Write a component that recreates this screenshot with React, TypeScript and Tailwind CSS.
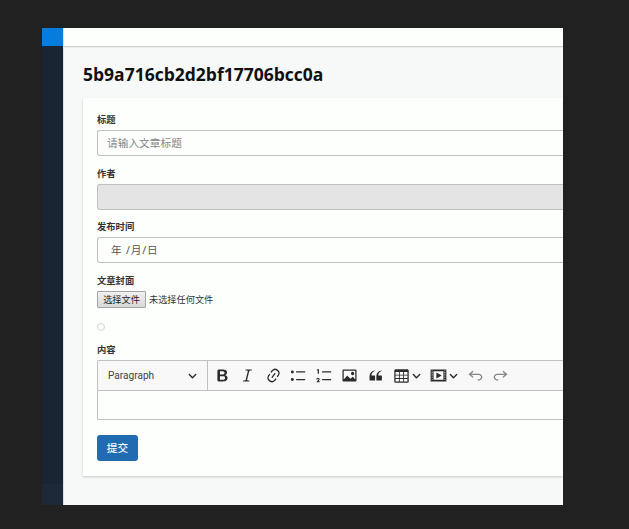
import type { ReactNode } from 'react';

const QUOTE =
  'M3 10.423a6.5 6.5 0 0 1 6.056-6.408l.038.67C6.448 5.423 5.354 7.663 5.22 10H9c.552 0 .5.432.5.986v4.511c0 .554-.448.503-1 .503h-5c-.552 0-.5-.449-.5-1.003v-4.574z';
const LINES =
  'M7 5.75c0 .414.336.75.75.75h9.5a.75.75 0 1 0 0-1.5h-9.5a.75.75 0 0 0-.75.75zM7 14.75c0 .414.336.75.75.75h9.5a.75.75 0 1 0 0-1.5h-9.5a.75.75 0 0 0-.75.75z';
const UNDO =
  'm5.042 9.367 2.189 1.837a.75.75 0 0 1-.965 1.149l-3.788-3.18a.747.747 0 0 1-.21-.284.75.75 0 0 1 .17-.945L6.23 4.762a.75.75 0 1 1 .964 1.15L4.863 7.866h8.917A.75.75 0 0 1 14 7.9a4 4 0 1 1-1.477 7.718l.344-1.489a2.5 2.5 0 1 0 1.094-4.73l.008-.032H5.042z';

function Icon({ children, className = '' }: { children: ReactNode; className?: string }) {
  return (
    <svg viewBox="0 0 20 20" className={`size-[17px] shrink-0 fill-current ${className}`}>
      {children}
    </svg>
  );
}

function Chevron({ className = '' }: { className?: string }) {
  return (
    <svg viewBox="0 0 10 10" className={`size-[9px] shrink-0 fill-current ${className}`}>
      <path d="M.941 4.523a.75.75 0 1 1 1.06-1.06l3.006 3.005 3.005-3.005a.75.75 0 1 1 1.06 1.06l-3.549 3.55a.75.75 0 0 1-1.168-.136L.941 4.523z" />
    </svg>
  );
}

function Label({ children }: { children: ReactNode }) {
  return <div className="h-[14px] text-[9.3px] leading-[14px] font-bold text-[#333]">{children}</div>;
}

function Field({ label, children, disabled = false }: { label: string; children?: ReactNode; disabled?: boolean }) {
  return (
    <div className="mb-[10.7px]">
      <Label>{label}</Label>
      <div
        className={`mt-[3px] flex h-[26px] items-center rounded-l-[3px] border border-r-0 border-[#bfc1c0] pl-[9px] text-[10.7px] ${
          disabled ? 'bg-[#e3e4e3]' : 'bg-[#fdfffc]'
        }`}
      >
        {children}
      </div>
    </div>
  );
}

function Toolbar() {
  return (
    <div className="flex h-[30px] items-center border-b border-[#bfc1c0] bg-[#f7f8f7] text-[#2b2b2b]">
      <div className="flex h-full w-[110px] shrink-0 items-center justify-between border-r border-[#bfc1c0] pr-[10px] pl-[10px]">
        <span className="font-['Roboto',sans-serif] text-[10.1px] text-[#444]">Paragraph</span>
        <Chevron />
      </div>
      <div className="ml-[5.5px] flex shrink-0 items-center gap-[8.6px]">
        <Icon>
          <path d="M10.187 17H5.773c-.637 0-1.092-.138-1.364-.415-.273-.277-.409-.718-.409-1.323V4.738c0-.617.14-1.062.419-1.332.279-.27.73-.406 1.354-.406h4.68c.69 0 1.288.041 1.793.124.506.083.96.242 1.36.477.341.197.644.447.906.75a3.262 3.262 0 0 1 .808 2.162c0 1.401-.722 2.426-2.167 3.075C15.05 10.175 16 11.315 16 13.01a3.756 3.756 0 0 1-2.296 3.504 6.1 6.1 0 0 1-1.517.377c-.571.073-1.238.11-2 .11zm-.217-6.217H7v4.087h3.069c1.977 0 2.965-.69 2.965-2.072 0-.707-.256-1.22-.768-1.537-.512-.319-1.277-.478-2.296-.478zM7 5.13v3.619h2.606c.729 0 1.292-.067 1.69-.2a1.6 1.6 0 0 0 .91-.765c.165-.267.247-.566.247-.897 0-.707-.26-1.176-.778-1.409-.519-.232-1.31-.348-2.375-.348H7z" />
        </Icon>
        <Icon>
          <path d="m9.586 14.633.021.004c-.036.335.095.655.393.962.082.083.173.15.274.201h1.474a.6.6 0 1 1 0 1.2H5.304a.6.6 0 0 1 0-1.2h1.15c.474-.07.809-.182 1.005-.334.157-.122.291-.32.404-.597l2.416-9.55a1.053 1.053 0 0 0-.281-.823 1.12 1.12 0 0 0-.442-.296H8.15a.6.6 0 0 1 0-1.2h6.443a.6.6 0 1 1 0 1.2h-1.195c-.376.056-.65.155-.823.296-.215.175-.423.439-.623.79l-2.366 9.347z" />
        </Icon>
        <Icon>
          <path d="m11.077 15 .991-1.416a.75.75 0 1 1 1.229.86l-1.148 1.64a.748.748 0 0 1-.217.206 5.251 5.251 0 0 1-8.503-5.955.741.741 0 0 1 .12-.274l1.147-1.639a.75.75 0 1 1 1.228.86L4.933 10.7l.006.003a3.75 3.75 0 0 0 6.132 4.294l.006.004zm5.494-5.335a.748.748 0 0 1-.12.274l-1.147 1.639a.75.75 0 1 1-1.228-.86l.86-1.23a3.75 3.75 0 0 0-6.144-4.301l-.86 1.229a.75.75 0 0 1-1.229-.86l1.148-1.64a.748.748 0 0 1 .217-.206 5.251 5.251 0 0 1 8.503 5.955zm-4.563-2.532a.75.75 0 0 1 .184 1.045l-3.155 4.505a.75.75 0 1 1-1.229-.86l3.155-4.506a.75.75 0 0 1 1.045-.184z" />
        </Icon>
        <Icon>
          <path d={LINES} />
          <circle cx="2.75" cy="5.75" r="1.75" />
          <circle cx="2.75" cy="14.75" r="1.75" />
        </Icon>
        <Icon>
          <path d={LINES} />
          <path d="M3.5 3v5H2V3.7H1v-1h2.5V3zM.343 17.857l2.59-3.257H2.92a.6.6 0 1 0-1.04 0H.302a2 2 0 1 1 3.995 0h-.001c-.048.405-.16.734-.333.988-.175.254-.59.692-1.244 1.312H4.3v1h-4l.043-.043z" />
        </Icon>
        <Icon>
          <path d="M6.91 10.54c.26-.23.64-.21.88.03l3.36 3.14 2.23-2.06a.64.64 0 0 1 .87 0l2.52 2.97V4.5H3.2v10.12l3.71-4.08zm10.27-7.51c.6 0 1.09.47 1.09 1.05v11.84c0 .59-.49 1.06-1.09 1.06H2.79c-.6 0-1.09-.47-1.09-1.06V4.08c0-.58.49-1.05 1.1-1.05h14.38zm-5.22 5.56a1.96 1.96 0 1 1 3.4-1.96 1.96 1.96 0 0 1-3.4 1.96z" />
        </Icon>
        <Icon>
          <path d={QUOTE} />
          <path d={QUOTE} transform="translate(8 0)" />
        </Icon>
        <div className="flex items-center gap-[2.5px]">
          <Icon>
            <path d="M3 6v3h4V6H3zm0 4v3h4v-3H3zm0 4v3h4v-3H3zm5 3h4v-3H8v3zm5 0h4v-3h-4v3zm4-4v-3h-4v3h4zm0-4V6h-4v3h4zm1.5 8a1.5 1.5 0 0 1-1.5 1.5H3A1.5 1.5 0 0 1 1.5 17V4c.222-.863 1.068-1.5 2-1.5h13c.932 0 1.778.637 2 1.5v13zM12 13v-3H8v3h4zm0-4V6H8v3h4z" />
          </Icon>
          <Chevron />
        </div>
        <div className="flex items-center gap-[2.5px]">
          <Icon>
            <path d="M18.68 3.03c.6 0 .59-.03.59.55v12.84c0 .59.01.56-.59.56H1.29c-.6 0-.59.03-.59-.56V3.58c0-.58-.01-.55.6-.55h17.38zM15.77 15V5H4.2v10h11.57zM2 4v1h1V4H2zm0 2v1h1V6H2zm0 2v1h1V8H2zm0 2v1h1v-1H2zm0 2v1h1v-1H2zm0 2v1h1v-1H2zM17 4v1h1V4h-1zm0 2v1h1V6h-1zm0 2v1h1V8h-1zm0 2v1h1v-1h-1zm0 2v1h1v-1h-1zm0 2v1h1v-1h-1zM7.5 7.177a.4.4 0 0 1 .593-.351l5.133 2.824a.4.4 0 0 1 0 .7l-5.133 2.824a.4.4 0 0 1-.593-.35V7.176v.001z" />
          </Icon>
          <Chevron />
        </div>
        <Icon className="text-[#858685]">
          <path d={UNDO} />
        </Icon>
        <Icon className="-scale-x-100 text-[#858685]">
          <path d={UNDO} />
        </Icon>
      </div>
    </div>
  );
}

export default function App() {
  return (
    <div className="h-[529px] w-[629px] overflow-hidden bg-[#212121] pt-[28px] pl-[42px] font-['Noto_Sans','Noto_Sans_CJK_SC',sans-serif]">
      <div className="flex h-[477px] w-[521px] overflow-hidden">
        <aside className="flex w-[21px] shrink-0 flex-col bg-[#1a2432]">
          <div className="h-[18px] bg-[#047ddf]" />
          <div className="flex-1" />
          <div className="h-[21px] bg-[#1f2838]" />
        </aside>
        <div className="flex min-w-0 flex-1 flex-col border-l border-[#dcdfe2] bg-[#f7f8f8]">
          <header className="h-[19px] shrink-0 border-b border-[#d0d2d2] bg-[#fdfffd] shadow-[0_1px_1px_#eceeee]" />
          <h1 className="mt-[15px] ml-[19px] h-[24px] font-['Open_Sans',sans-serif] text-[17.5px] leading-[24px] font-bold whitespace-nowrap text-[#111]">
            5b9a716cb2d2bf17706bcc0a
          </h1>
          <main className="mt-[12px] ml-[19px] h-[378px] bg-[#fdfffc] pt-[15px] pl-[14px] shadow-[0_1px_2px_#c6c8c8]">
            <Field label="标题">
              <span className="text-[#858685]">请输入文章标题</span>
            </Field>
            <Field label="作者" disabled />
            <Field label="发布时间">
              <span className="pl-[4px] tracking-[0.8px] whitespace-pre text-[#555]">年 /月/日</span>
            </Field>
            <Label>文章封面</Label>
            <div className="mt-[3px] flex h-[17px] items-center text-[9.2px] leading-none text-[#333]">
              <button className="mr-[3px] h-[17px] w-[49px] shrink-0 rounded-[1px] border border-[#a3a4a3] bg-linear-to-b from-[#f1f1f1] to-[#d7d8d7] whitespace-nowrap text-[#222]">
                选择文件
              </button>
              未选择任何文件
            </div>
            <div className="mt-[15px] mb-[12px] size-[8px] rounded-full border border-[#d3d5d3]" />
            <Label>内容</Label>
            <div className="mt-[3px] h-[60px] overflow-hidden rounded-l-[2px] border border-r-0 border-[#bfc1c0]">
              <Toolbar />
            </div>
            <button className="mt-[15px] h-[26px] w-[41px] rounded-[3px] bg-[#216bb0] text-[10.7px] leading-[26px] font-medium text-[#f3f8fc]">
              提交
            </button>
          </main>
        </div>
      </div>
    </div>
  );
}
